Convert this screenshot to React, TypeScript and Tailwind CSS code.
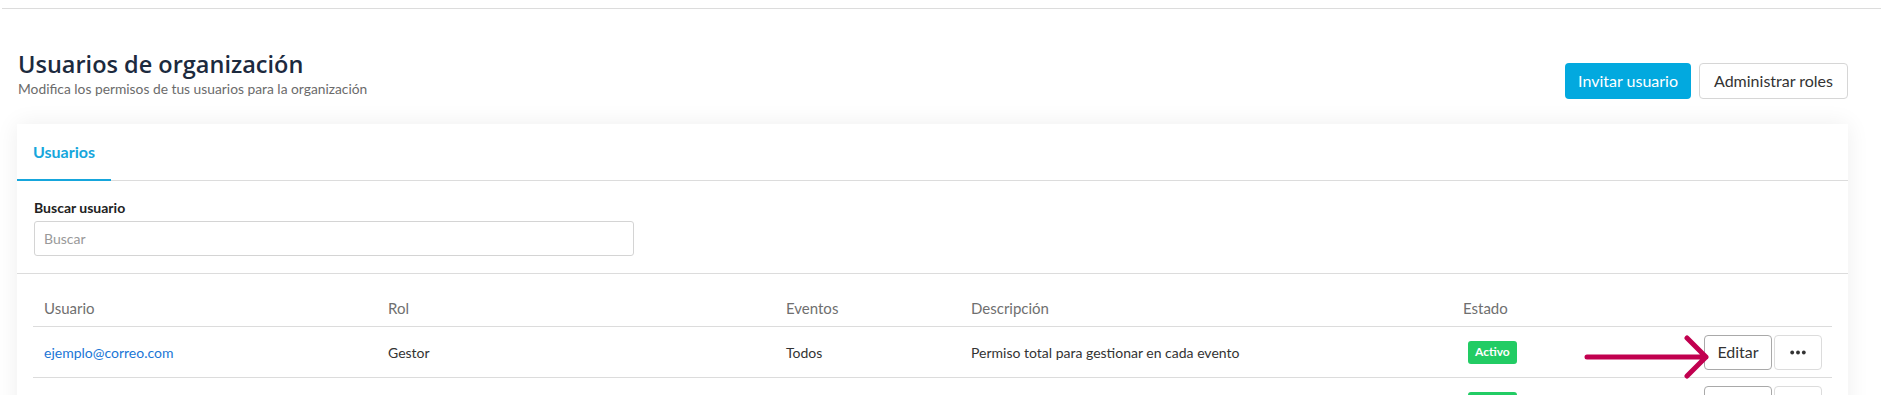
import React from 'react';

const rows = [
  { email: 'ejemplo@correo.com', rol: 'Gestor', eventos: 'Todos', desc: 'Permiso total para gestionar en cada evento', arrow: true },
  { email: 'usuario@correo.com', rol: 'Colaborador', eventos: 'Todos', desc: 'Permiso de lectura en cada evento', arrow: false },
];

const cols = 'grid grid-cols-[344px_398px_185px_492px_1fr]';

const Dots: React.FC = () => (
  <svg width="16" height="5" viewBox="0 0 16 5">
    <circle cx="2.2" cy="2.5" r="1.9" fill="#333" />
    <circle cx="8" cy="2.5" r="1.9" fill="#333" />
    <circle cx="13.8" cy="2.5" r="1.9" fill="#333" />
  </svg>
);

const Arrow: React.FC = () => (
  <svg
    width="130"
    height="44"
    viewBox="0 0 130 44"
    className="absolute left-[1550px] top-[8px] pointer-events-none"
  >
    <path
      d="M4 22 H123 M104 3 L123 22 L104 41"
      fill="none"
      stroke="#c1004f"
      strokeWidth="5"
      strokeLinecap="round"
      strokeLinejoin="round"
    />
  </svg>
);

export default function App() {
  return (
    <div className="min-h-screen bg-white font-['Lato',sans-serif]">
      {/* top bar edge */}
      <div className="ml-[2px] h-[9px] border-b border-[#dcdcdc]" />

      <div className="pl-[17px] pr-[33px] pt-[41px]">
        {/* Header */}
        <div className="flex justify-between items-start">
          <div className="pl-[1px]">
            <h1 className="font-['Open_Sans',sans-serif] font-semibold text-[23.5px] leading-[28px] text-[#1c2a3e]">
              Usuarios de organización
            </h1>
            <p className="mt-[3px] text-[13.8px] leading-[16px] text-[#6b6b6b]">
              Modifica los permisos de tus usuarios para la organización
            </p>
          </div>
          <div className="mt-[13px] flex gap-2">
            <button className="h-[36px] px-[13px] rounded-[4px] bg-[#02a9df] text-white text-[16px]">
              Invitar usuario
            </button>
            <button className="h-[36px] px-[14px] rounded-[4px] border border-[#d6d6d6] bg-white text-[#333] text-[16px]">
              Administrar roles
            </button>
          </div>
        </div>

        {/* Card */}
        <div className="mt-[25px] bg-white shadow-[0_0_22px_rgba(0,0,0,0.07)]">
          <div className="flex h-[57px] border-b border-[#dcdcdc]">
            <div className="-mb-px flex items-center px-4 border-b-2 border-[#16a6dc] text-[16px] font-bold text-[#16a6dc]">
              Usuarios
            </div>
          </div>

          <div className="px-[17px] pt-[19px] pb-[17px] border-b border-[#dcdcdc]">
            <label className="block text-[14px] leading-[16px] font-bold text-[#222]">Buscar usuario</label>
            <input
              placeholder="Buscar"
              className="mt-[5px] block w-[600px] h-[35px] px-[9px] rounded-[3px] border border-[#d4d4d4] text-[14px] text-[#333] placeholder:text-[#999] outline-none"
            />
          </div>

          <div className="px-4 pt-[16px]">
            <div className={`${cols} h-[37px] items-center border-b border-[#dcdcdc] text-[15px] text-[#6f6f6f]`}>
              <div className="pl-[11px]">Usuario</div>
              <div className="pl-[11px]">Rol</div>
              <div className="pl-[11px]">Eventos</div>
              <div className="pl-[11px]">Descripción</div>
              <div className="pl-[11px]">Estado</div>
            </div>
            {rows.map((r) => (
              <div
                key={r.email}
                className={`${cols} relative h-[51px] items-center border-b border-[#dcdcdc] text-[14px] text-[#333]`}
              >
                <div className="pl-[11px] text-[#1a76d6]">{r.email}</div>
                <div className="pl-[11px]">{r.rol}</div>
                <div className="pl-[11px]">{r.eventos}</div>
                <div className="pl-[11px]">{r.desc}</div>
                <div className="flex items-center justify-between pl-[16px] pr-[10px]">
                  <span className="h-[23px] px-[7px] flex items-center rounded-[3px] bg-[#22cc64] text-white text-[12px] font-bold">
                    Activo
                  </span>
                  <div className="flex gap-[2px]">
                    <button className="h-[35px] w-[68px] rounded-[4px] border border-[#a9a9a9] bg-white text-[16px] text-[#333]">
                      Editar
                    </button>
                    <button className="h-[35px] w-[48px] flex items-center justify-center rounded-[4px] border border-[#dcdcdc] bg-white">
                      <Dots />
                    </button>
                  </div>
                </div>
                {r.arrow && <Arrow />}
              </div>
            ))}
          </div>
        </div>
      </div>
    </div>
  );
}
